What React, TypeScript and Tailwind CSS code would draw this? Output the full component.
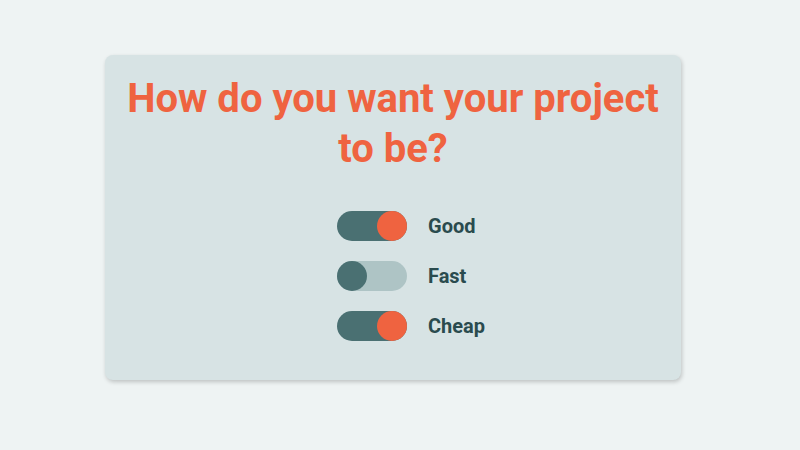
import { useState } from "react";

type Item = { key: string; label: string };

const items: Item[] = [
  { key: "good", label: "Good" },
  { key: "fast", label: "Fast" },
  { key: "cheap", label: "Cheap" },
];

function Toggle({ on, onClick }: { on: boolean; onClick: () => void }) {
  return (
    <button
      onClick={onClick}
      className={`relative h-[30px] w-[70px] rounded-full transition-colors ${
        on ? "bg-[#4a7072]" : "bg-[#aec4c5]"
      }`}
    >
      <span
        className={`absolute top-0 h-[30px] w-[30px] rounded-full transition-all ${
          on ? "left-[40px] bg-[#ef6340]" : "left-0 bg-[#4a7072]"
        }`}
      />
    </button>
  );
}

export default function App() {
  const [state, setState] = useState<Record<string, boolean>>({
    good: true,
    fast: false,
    cheap: true,
  });

  return (
    <div
      className="min-h-screen bg-[#eef3f3] pt-[55px]"
      style={{ fontFamily: "Roboto, 'Liberation Sans', sans-serif" }}
    >
      <div className="ml-[105px] w-[576px] rounded-lg bg-[#d7e3e4] pt-[19px] pb-[39px] shadow-[1px_2px_4px_rgba(0,0,0,0.2)]">
        <h1 className="text-center text-[40px] font-bold leading-[50px] text-[#ef6340]">
          How do you want your project
          <br />
          to be?
        </h1>

        <div className="mt-[37px] flex flex-col gap-[20px] pl-[232px]">
          {items.map((item) => (
            <div key={item.key} className="flex items-center gap-[21px]">
              <Toggle
                on={state[item.key]}
                onClick={() =>
                  setState((s) => ({ ...s, [item.key]: !s[item.key] }))
                }
              />
              <span className="text-[20px] font-bold text-[#2a4b4e]">
                {item.label}
              </span>
            </div>
          ))}
        </div>
      </div>
    </div>
  );
}
